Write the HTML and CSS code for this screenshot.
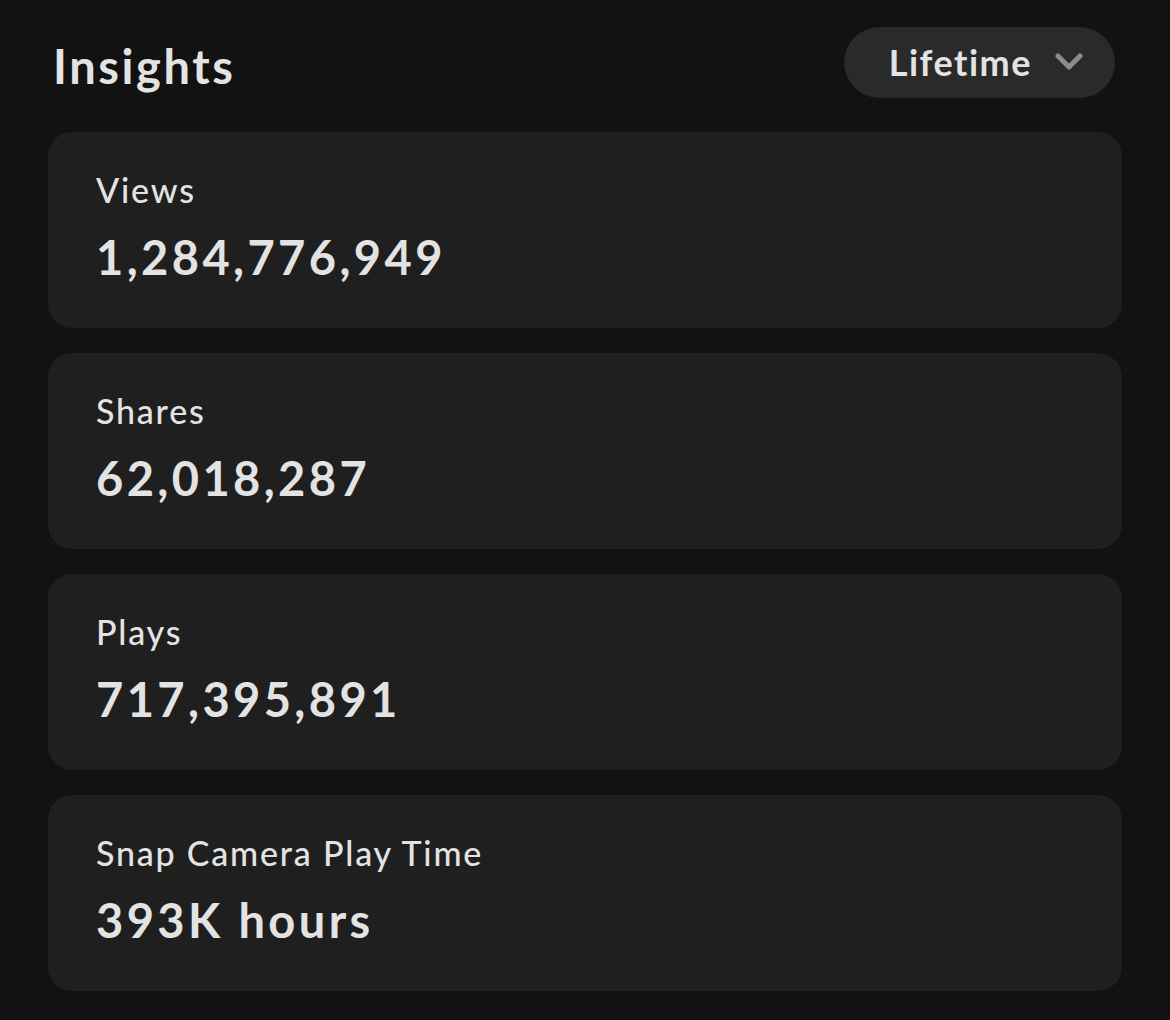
FILE: index.html
```html
<!DOCTYPE html>
<html>
<head>
<meta charset="utf-8">
<link rel="stylesheet" href="styles.css">
</head>
<body>
<div class="page">
  <header class="header">
    <h1 class="title">Insights</h1>
    <button class="range">
      <span class="range-label">Lifetime</span>
      <svg class="chev" width="28" height="20" viewBox="0 0 28 20"><path d="M3 4 L14 15 L25 4" fill="none" stroke="#8c8c8c" stroke-width="5" stroke-linecap="round" stroke-linejoin="round"/></svg>
    </button>
  </header>
  <div class="cards">
    <div class="card"><div class="label">Views</div><div class="value">1,284,776,949</div></div>
    <div class="card"><div class="label">Shares</div><div class="value">62,018,287</div></div>
    <div class="card"><div class="label">Plays</div><div class="value">717,395,891</div></div>
    <div class="card"><div class="label">Snap Camera Play Time</div><div class="value">393K hours</div></div>
  </div>
</div>
</body>
</html>
```
FILE: styles.css
```css
html, body {
  margin: 0;
  background: #121212;
}
body {
  font-family: Lato, "Open Sans", sans-serif;
  color: #e3e3e3;
  font-variant-ligatures: none;
}
.page {
  padding: 26px 48px 0 48px;
}
.header {
  display: flex;
  justify-content: space-between;
  align-items: center;
  padding: 0 7px 0 5px;
  height: 72px;
}
.title {
  margin: 0;
  font-size: 47px;
  font-weight: 700;
  letter-spacing: 2.6px;
  line-height: 1;
  margin-top: 8px;
}
.range {
  display: flex;
  align-items: center;
  gap: 23px;
  height: 71px;
  padding: 0 32px 0 45px;
  border: none;
  border-radius: 36px;
  background: #2a2a2a;
  color: #e3e3e3;
  font-family: inherit;
  font-size: 36px;
  font-weight: 700;
  letter-spacing: 1.5px;
  font-variant-ligatures: none;
}
.chev {
  display: block;
}
.cards {
  display: flex;
  flex-direction: column;
  gap: 25px;
  margin-top: 34px;
}
.card {
  height: 196px;
  box-sizing: border-box;
  background: #1f1f1f;
  border-radius: 24px;
  padding: 38px 48px 0 48px;
}
.label {
  font-size: 34px;
  font-weight: 500;
  line-height: 40px;
  letter-spacing: 1.8px;
}
.value {
  font-size: 47px;
  font-weight: 700;
  line-height: 56px;
  margin-top: 19px;
  letter-spacing: 3.4px;
}
```
